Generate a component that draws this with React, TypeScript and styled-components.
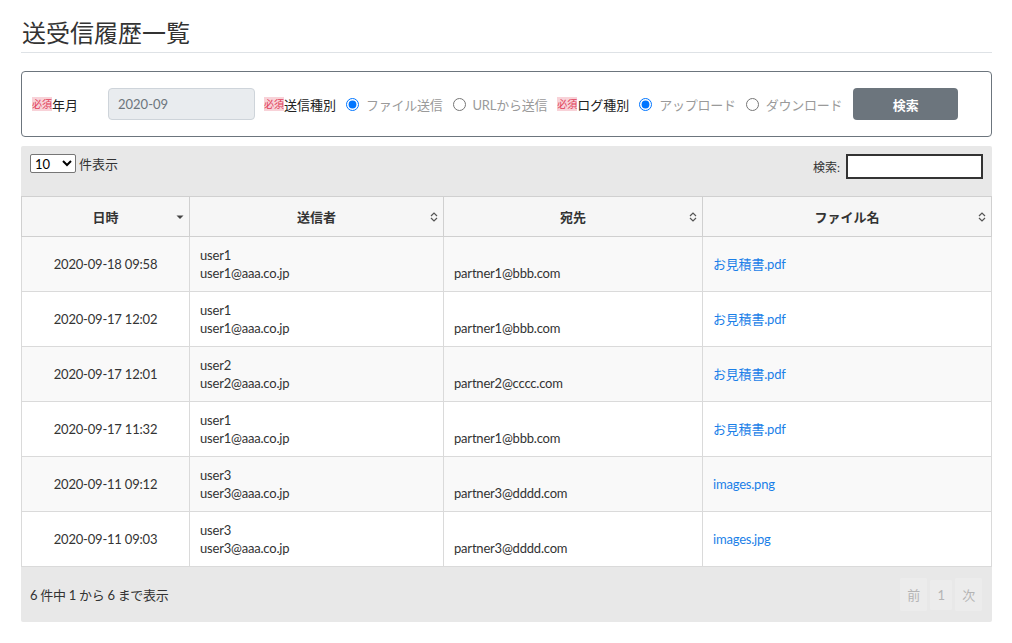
import React from "react";
import styled, { createGlobalStyle } from "styled-components";

const GlobalStyle = createGlobalStyle`
    body {
        margin: 0;
        background: #ffffff;
        font-family: Lato, "Noto Sans CJK JP", sans-serif;
        color: #333333;
        font-size: 13px;
    }
`;

const Page = styled.div`
    padding: 18px 20px 20px 21px;
`;

const Title = styled.h1`
    margin: 0;
    padding: 0 0 4px 1px;
    font-size: 24px;
    font-weight: 400;
    line-height: 30px;
    color: #333333;
    border-bottom: 1px solid #dee2e6;
`;

const SearchForm = styled.form`
    margin-top: 18px;
    display: flex;
    align-items: center;
    height: 66px;
    box-sizing: border-box;
    padding: 0 10px;
    border: 1px solid #6c757d;
    border-radius: 4px;
    white-space: nowrap;
`;

const Field = styled.div`
    display: flex;
    align-items: center;
    flex-shrink: 0;
`;

const Required = styled.span`
    font-size: 10px;
    line-height: 14px;
    color: #e0405a;
    background: #f8d2d8;
`;

const Label = styled.span<{ $width?: number }>`
    color: #222222;
    font-size: 13px;
    ${(p) => (p.$width ? `width: ${p.$width}px;` : "")}
    margin-right: 10px;
`;

const MonthInput = styled.input`
    width: 147px;
    height: 32px;
    box-sizing: border-box;
    padding: 0 9px;
    margin-right: 9px;
    background: #e9ecef;
    border: 1px solid #ced4da;
    border-radius: 4px;
    color: #6c757d;
    font-family: Lato, sans-serif;
    font-size: 13px;
`;

const RadioLabel = styled.label`
    display: flex;
    align-items: center;
    color: #9a9a9a;
    font-size: 13px;
    letter-spacing: -0.25px;
    margin-right: 10px;

    input {
        width: 13px;
        height: 13px;
        margin: 0 7px 0 0;
    }
`;

const SubmitButton = styled.button`
    flex-shrink: 0;
    margin-left: 1px;
    width: 105px;
    height: 32px;
    border: none;
    border-radius: 4px;
    background: #6c757d;
    color: #ffffff;
    font-weight: 700;
    font-size: 13px;
    font-family: Lato, "Noto Sans CJK JP", sans-serif;
`;

const TableWrapper = styled.div`
    margin-top: 9px;
    background: #e8e8e8;
    border-radius: 2px;
`;

const TopBar = styled.div`
    display: flex;
    justify-content: space-between;
    align-items: flex-start;
    height: 50px;
    box-sizing: border-box;
    padding: 8px 9px 0 9px;
`;

const LengthControl = styled.label`
    display: flex;
    align-items: center;
    gap: 3px;
    color: #333333;

    select {
        width: 46px;
        height: 19px;
        font-size: 13px;
        font-family: Lato, sans-serif;
        background: #ffffff;
        border: 1px solid #767676;
        border-radius: 2px;
    }
`;

const FilterControl = styled.label`
    display: flex;
    align-items: center;
    gap: 6px;
    color: #333333;
    font-size: 12px;

    input {
        width: 137px;
        height: 25px;
        box-sizing: border-box;
        border: 2px solid #333333;
        background: #ffffff;
    }
`;

const Table = styled.table`
    width: 100%;
    border-collapse: collapse;
    table-layout: fixed;
    background: #ffffff;
    border-bottom: 1px solid #111111;
`;

const HeadCell = styled.th<{ $width: number }>`
    position: relative;
    width: ${(p) => p.$width}px;
    height: 40px;
    box-sizing: border-box;
    padding: 0;
    background: #f6f6f6;
    border: 1px solid #d0d0d0;
    font-weight: 700;
    font-size: 13px;
    color: #333333;
    text-align: center;

    svg {
        position: absolute;
        right: 5px;
        top: 15px;
    }
`;

const Row = styled.tr<{ $striped: boolean }>`
    background: ${(p) => (p.$striped ? "#f9f9f9" : "#ffffff")};
`;

const Cell = styled.td<{ $center?: boolean }>`
    height: 55px;
    box-sizing: border-box;
    padding: 0 10px;
    border: 1px solid #dadada;
    line-height: 18px;
    font-size: 13px;
    letter-spacing: -0.2px;
    color: #333333;
    text-align: ${(p) => (p.$center ? "center" : "left")};
    vertical-align: middle;
`;

const FileLink = styled.a`
    color: #1a7fe8;
    text-decoration: none;
`;

const FooterBar = styled.div`
    display: flex;
    justify-content: space-between;
    align-items: center;
    height: 55px;
    padding: 0 10px 0 9px;
    color: #333333;
    letter-spacing: -0.3px;
`;

const Pager = styled.div`
    display: flex;
    gap: 3px;
`;

const PageButton = styled.span<{ $narrow?: boolean }>`
    display: flex;
    align-items: center;
    justify-content: center;
    width: ${(p) => (p.$narrow ? 22 : 27)}px;
    height: ${(p) => (p.$narrow ? 30 : 33)}px;
    margin-top: ${(p) => (p.$narrow ? 2 : 0)}px;
    border-radius: 2px;
    background: #ececec;
    color: #b4b4b4;
    font-size: 13px;
`;

const SortBoth = () => (
    <svg width="8" height="10" viewBox="0 0 8 10">
        <path d="M1 4 L4 1 L7 4" fill="none" stroke="#555" strokeWidth="1.2" />
        <path d="M1 6 L4 9 L7 6" fill="none" stroke="#555" strokeWidth="1.2" />
    </svg>
);

const SortDesc = () => (
    <svg width="8" height="10" viewBox="0 0 8 10">
        <path d="M0.5 3.5 L7.5 3.5 L4 7 Z" fill="#444" />
    </svg>
);

const rows = [
    { date: "2020-09-18 09:58", user: "user1", mail: "user1@aaa.co.jp", to: "partner1@bbb.com", file: "お見積書.pdf" },
    { date: "2020-09-17 12:02", user: "user1", mail: "user1@aaa.co.jp", to: "partner1@bbb.com", file: "お見積書.pdf" },
    { date: "2020-09-17 12:01", user: "user2", mail: "user2@aaa.co.jp", to: "partner2@cccc.com", file: "お見積書.pdf" },
    { date: "2020-09-17 11:32", user: "user1", mail: "user1@aaa.co.jp", to: "partner1@bbb.com", file: "お見積書.pdf" },
    { date: "2020-09-11 09:12", user: "user3", mail: "user3@aaa.co.jp", to: "partner3@dddd.com", file: "images.png" },
    { date: "2020-09-11 09:03", user: "user3", mail: "user3@aaa.co.jp", to: "partner3@dddd.com", file: "images.jpg" },
];

const App = () => {
    return (
        <Page>
            <GlobalStyle />
            <Title>送受信履歴一覧</Title>

            <SearchForm onSubmit={(e) => e.preventDefault()}>
                <Field>
                    <Required>必須</Required>
                    <Label $width={46}>年月</Label>
                    <MonthInput defaultValue="2020-09" readOnly />
                </Field>
                <Field>
                    <Required>必須</Required>
                    <Label>送信種別</Label>
                    <RadioLabel>
                        <input type="radio" name="send" defaultChecked />
                        ファイル送信
                    </RadioLabel>
                    <RadioLabel>
                        <input type="radio" name="send" />
                        URLから送信
                    </RadioLabel>
                </Field>
                <Field>
                    <Required>必須</Required>
                    <Label>ログ種別</Label>
                    <RadioLabel>
                        <input type="radio" name="log" defaultChecked />
                        アップロード
                    </RadioLabel>
                    <RadioLabel>
                        <input type="radio" name="log" />
                        ダウンロード
                    </RadioLabel>
                </Field>
                <SubmitButton type="submit">検索</SubmitButton>
            </SearchForm>

            <TableWrapper>
                <TopBar>
                    <LengthControl>
                        <select defaultValue="10">
                            <option value="10">10</option>
                            <option value="25">25</option>
                            <option value="50">50</option>
                        </select>
                        件表示
                    </LengthControl>
                    <FilterControl>
                        検索:
                        <input type="search" />
                    </FilterControl>
                </TopBar>

                <Table>
                    <thead>
                        <tr>
                            <HeadCell $width={168}>
                                日時
                                <SortDesc />
                            </HeadCell>
                            <HeadCell $width={254}>
                                送信者
                                <SortBoth />
                            </HeadCell>
                            <HeadCell $width={259}>
                                宛先
                                <SortBoth />
                            </HeadCell>
                            <HeadCell $width={289}>
                                ファイル名
                                <SortBoth />
                            </HeadCell>
                        </tr>
                    </thead>
                    <tbody>
                        {rows.map((r, i) => (
                            <Row key={i} $striped={i % 2 === 0}>
                                <Cell $center>{r.date}</Cell>
                                <Cell>
                                    {r.user}
                                    <br />
                                    {r.mail}
                                </Cell>
                                <Cell>
                                    <br />
                                    {r.to}
                                </Cell>
                                <Cell>
                                    <FileLink href="#">{r.file}</FileLink>
                                </Cell>
                            </Row>
                        ))}
                    </tbody>
                </Table>

                <FooterBar>
                    <span>6 件中 1 から 6 まで表示</span>
                    <Pager>
                        <PageButton>前</PageButton>
                        <PageButton $narrow>1</PageButton>
                        <PageButton>次</PageButton>
                    </Pager>
                </FooterBar>
            </TableWrapper>
        </Page>
    );
};

export default App;
